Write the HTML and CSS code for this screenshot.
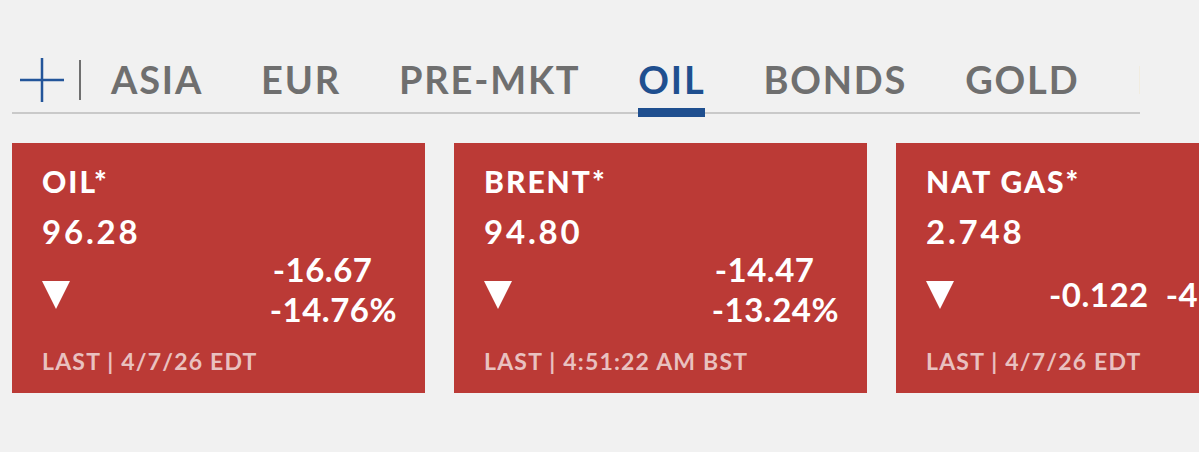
FILE: index.html
```html
<!DOCTYPE html>
<html lang="en">
<head>
<meta charset="utf-8">
<title>Markets</title>
<link rel="stylesheet" href="styles.css">
</head>
<body>
  <nav class="tabbar">
    <button class="add" aria-label="Add">
      <svg width="44" height="44" viewBox="0 0 44 44"><path d="M0 22H44M22 0V44" stroke="#23559a" stroke-width="2.5" fill="none"/></svg>
    </button>
    <span class="sep"></span>
    <ul class="tabs">
      <li class="tab">ASIA</li>
      <li class="tab">EUR</li>
      <li class="tab">PRE-MKT</li>
      <li class="tab active">OIL</li>
      <li class="tab">BONDS</li>
      <li class="tab">GOLD</li>
      <li class="tab">FX</li>
    </ul>
  </nav>

  <section class="cards">
    <article class="card">
      <h2 class="name">OIL*</h2>
      <div class="price">96.28</div>
      <div class="move">
        <svg class="arrow" width="28" height="28" viewBox="0 0 28 28"><polygon points="0,0 28,0 14,28" fill="#fff"/></svg>
        <div class="change stacked"><span class="abs">-16.67</span><span class="pct">-14.76%</span></div>
      </div>
      <div class="foot">LAST | 4/7/26 EDT</div>
    </article>
    <article class="card">
      <h2 class="name">BRENT*</h2>
      <div class="price">94.80</div>
      <div class="move">
        <svg class="arrow" width="28" height="28" viewBox="0 0 28 28"><polygon points="0,0 28,0 14,28" fill="#fff"/></svg>
        <div class="change stacked"><span class="abs">-14.47</span><span class="pct">-13.24%</span></div>
      </div>
      <div class="foot">LAST | 4:51:22 AM BST</div>
    </article>
    <article class="card">
      <h2 class="name">NAT GAS*</h2>
      <div class="price">2.748</div>
      <div class="move">
        <svg class="arrow" width="28" height="28" viewBox="0 0 28 28"><polygon points="0,0 28,0 14,28" fill="#fff"/></svg>
        <div class="change inline"><span class="abs">-0.122</span><span class="pct">-4.25%</span></div>
      </div>
      <div class="foot">LAST | 4/7/26 EDT</div>
    </article>
  </section>
</body>
</html>
```

FILE: styles.css
```css
* { box-sizing: border-box; }

html, body {
  margin: 0;
  padding: 0;
}

body {
  width: 1199px;
  height: 452px;
  overflow: hidden;
  background: #f1f1f1;
  font-family: "Lato", "Liberation Sans", sans-serif;
  font-weight: 700;
}

/* ---------- tab bar ---------- */
.tabbar {
  display: flex;
  align-items: flex-start;
  width: 1128px;
  height: 56px;
  margin: 58px 0 0 12px;
  border-bottom: 2px solid #c9c9c9;
  clip-path: inset(-20px 0 -10px 0);
}

.add {
  flex: none;
  display: flex;
  width: 44px;
  height: 44px;
  margin: 0 15px 0 8px;
  padding: 0;
  border: 0;
  background: none;
}

.sep {
  flex: none;
  width: 2px;
  height: 40px;
  margin-top: 2px;
  background: #707070;
}

.tabs {
  flex: none;
  display: flex;
  gap: 58px;
  margin: 0 0 0 30px;
  padding: 0;
  list-style: none;
  white-space: nowrap;
}

.tab {
  position: relative;
  font-size: 38px;
  line-height: 43px;
  letter-spacing: 1.8px;
  color: #6f6f6f;
}

.tab.active {
  color: #1f4f8f;
}

.tab.active::after {
  content: "";
  position: absolute;
  left: 0;
  right: 0;
  top: 50px;
  height: 9px;
  background: #1f4f8f;
}

/* ---------- cards ---------- */
.cards {
  display: flex;
  gap: 29px;
  margin: 29px 0 0 12px;
}

.card {
  flex: 0 0 413px;
  height: 250px;
  padding: 20px 30px 0 30px;
  background: #bb3a36;
  color: #fff;
  display: flex;
  flex-direction: column;
}

.name {
  margin: 0;
  font-size: 30px;
  line-height: 36px;
  font-weight: 900;
  letter-spacing: 2px;
}

.price {
  margin-top: 14px;
  font-size: 33px;
  line-height: 36px;
  letter-spacing: 2.8px;
}

.move {
  display: flex;
  align-items: flex-start;
  height: 97px;
}

.arrow {
  flex: none;
  margin-top: 32px;
}

.change {
  font-size: 33px;
  line-height: 40px;
  letter-spacing: 0.5px;
}

.change.stacked {
  margin-left: auto;
  margin-right: -2px;
  display: flex;
  flex-direction: column;
  align-items: flex-start;
}

.change.stacked .abs {
  margin-left: 3px;
}

.change.inline {
  display: flex;
  gap: 17px;
  white-space: nowrap;
  margin: 25px 0 0 95px;
}

.foot {
  margin-top: 1px;
  font-size: 23px;
  line-height: 28px;
  letter-spacing: 1.2px;
  color: rgba(255, 255, 255, 0.7);
}
```
